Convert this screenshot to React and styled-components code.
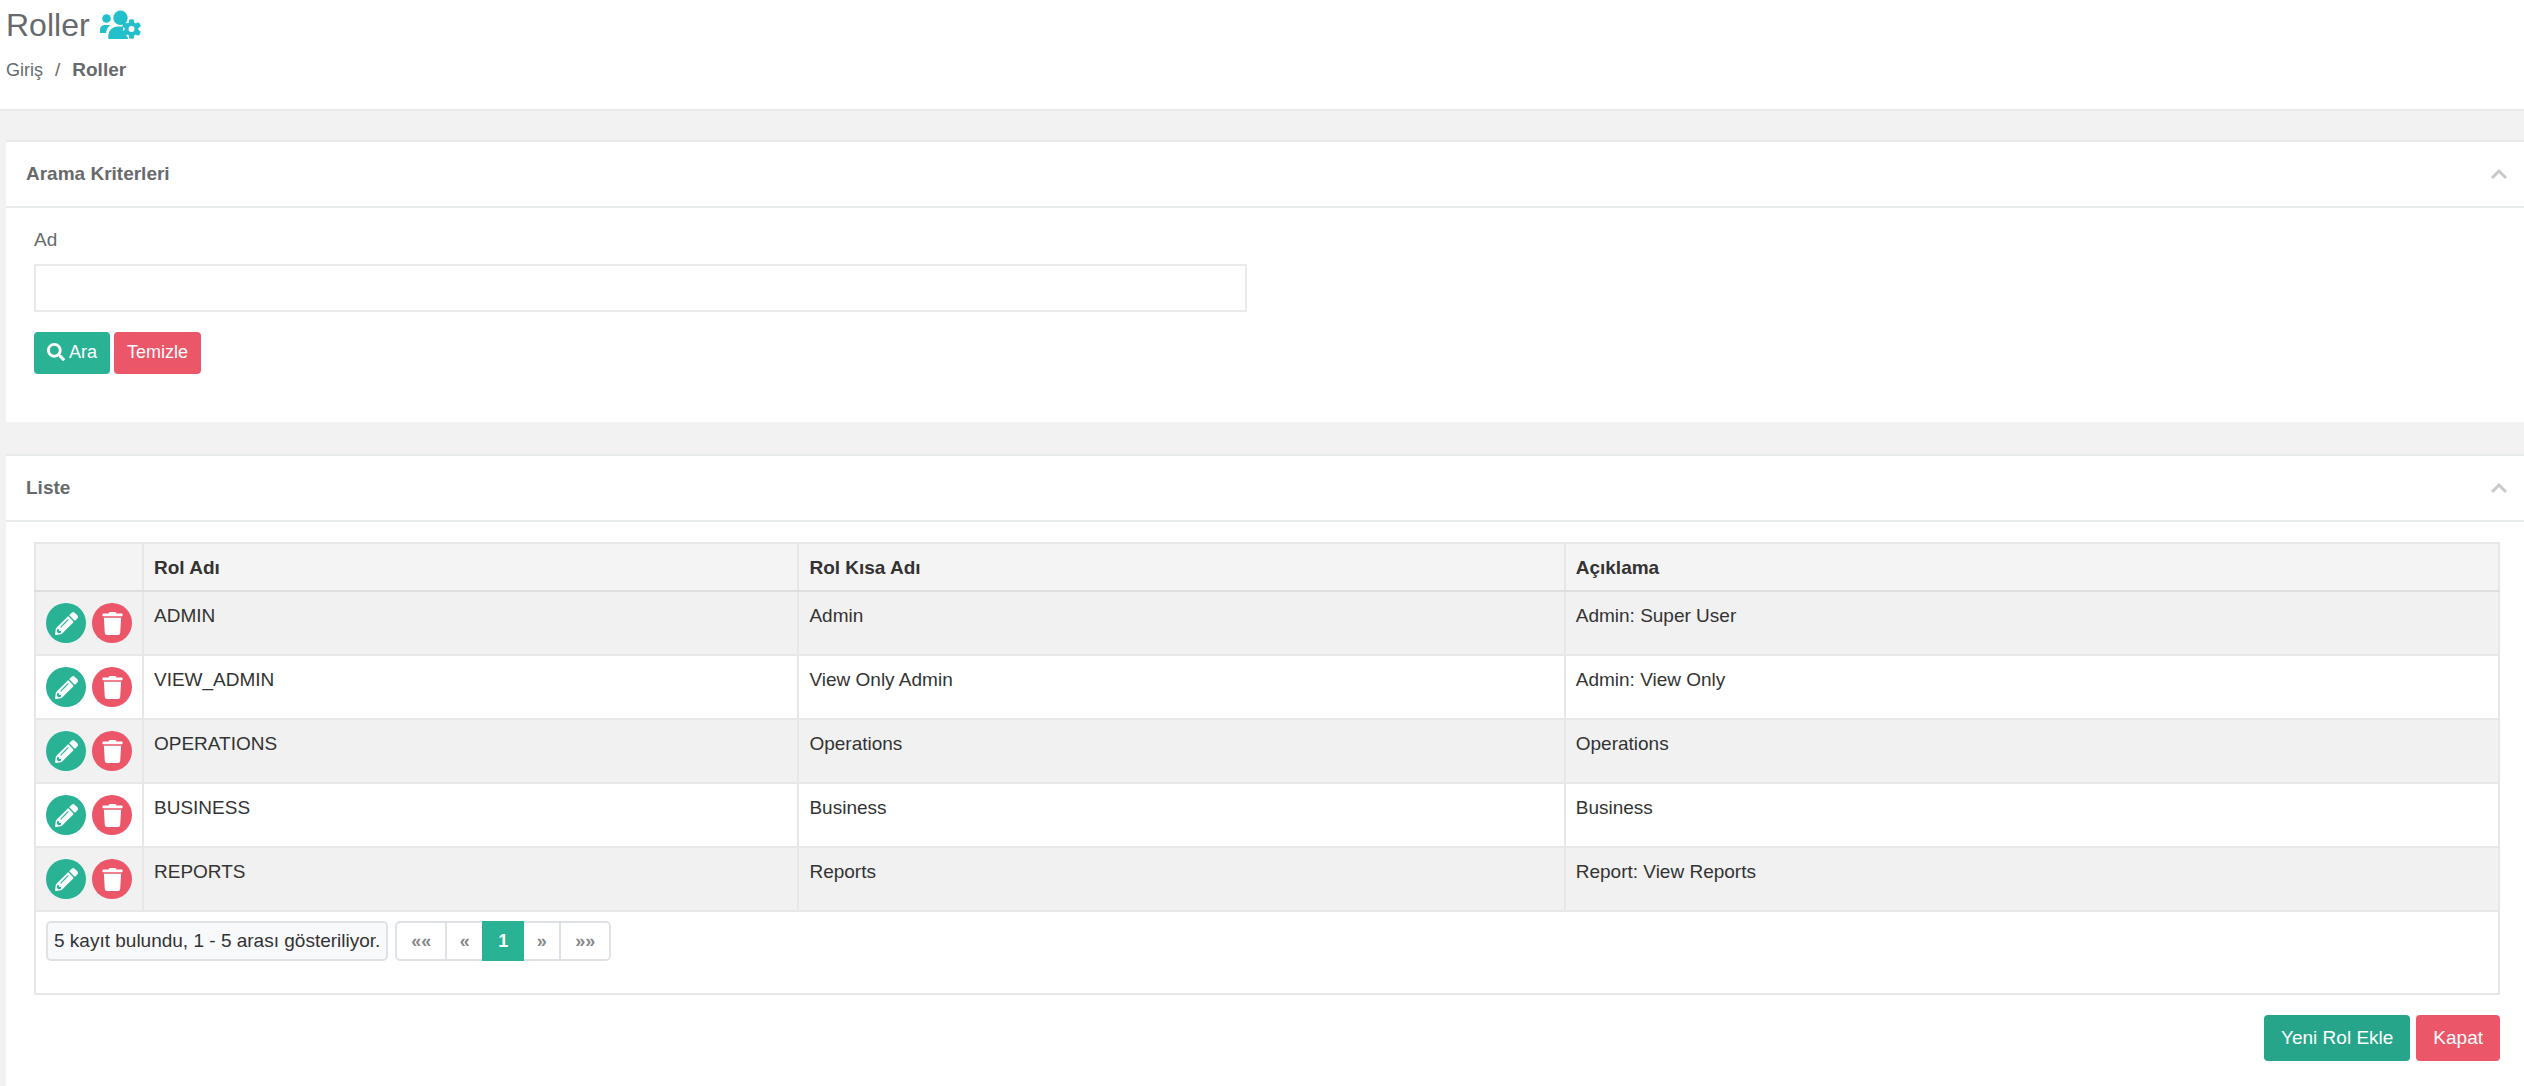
import { useState } from "react";
import styled, { createGlobalStyle, css } from "styled-components";
import { FaPencilAlt, FaSearch, FaTrash } from "react-icons/fa";

const ROLES = [
  { name: "ADMIN", shortName: "Admin", description: "Admin: Super User" },
  {
    name: "VIEW_ADMIN",
    shortName: "View Only Admin",
    description: "Admin: View Only",
  },
  { name: "OPERATIONS", shortName: "Operations", description: "Operations" },
  { name: "BUSINESS", shortName: "Business", description: "Business" },
  { name: "REPORTS", shortName: "Reports", description: "Report: View Reports" },
];

const PAGES = [
  { label: "««", width: 52 },
  { label: "«", width: 39 },
  { label: "1", width: 42, active: true },
  { label: "»", width: 39 },
  { label: "»»", width: 52 },
];

const Panel = ({ title, children }) => {
  const [open, setOpen] = useState(true);

  return (
    <PanelBox>
      <PanelHeader>
        <PanelTitle>{title}</PanelTitle>
        <CollapseButton
          type="button"
          aria-label={title}
          aria-expanded={open}
          $open={open}
          onClick={() => setOpen((prev) => !prev)}
        >
          <Chevron />
        </CollapseButton>
      </PanelHeader>
      {open && children}
    </PanelBox>
  );
};

const Chevron = () => (
  <svg width="18" height="12" viewBox="0 0 18 12" aria-hidden="true">
    <path d="m2 10 7-7 7 7" fill="none" stroke="currentColor" strokeWidth="3" />
  </svg>
);

const RolesIcon = () => (
  <svg viewBox="0 0 42 30" fill="currentColor" aria-hidden="true">
    <circle cx="7.5" cy="8.5" r="4.3" />
    <circle cx="21.5" cy="7.8" r="7.2" />
    <path d="M1 23v-3.5A5 5 0 0 1 6 15h5.5C8.5 17 7.2 20 7.2 23z" />
    <path d="M9.3 29v-3.5a9 9 0 0 1 9-9H26l3 12.5z" />
    <circle cx="32.5" cy="19" r="8.6" fill="#fff" />
    {[0, 60, 120, 180, 240, 300].map((angle) => (
      <path
        key={angle}
        d="M30 14.5 30.6 10q1.9-.6 3.8 0l.6 4.5z"
        stroke="currentColor"
        strokeWidth="1"
        transform={`rotate(${angle} 32.5 19)`}
      />
    ))}
    <circle cx="32.5" cy="19" r="6.8" />
    <circle cx="32.5" cy="19" r="3" fill="#fff" />
  </svg>
);

const App = () => {
  const [name, setName] = useState("");

  return (
    <>
      <GlobalStyle />
      <PageHeader>
        <PageTitle>
          Roller
          <RolesIcon />
        </PageTitle>
        <Breadcrumb>
          <a href="#giris">Giriş</a>
          <span>/</span>
          <strong>Roller</strong>
        </Breadcrumb>
      </PageHeader>
      <Content>
        <Panel title="Arama Kriterleri">
          <SearchForm onSubmit={(e) => e.preventDefault()}>
            <label htmlFor="role-name">Ad</label>
            <TextInput
              id="role-name"
              value={name}
              onChange={(e) => setName(e.target.value)}
            />
            <SearchActions>
              <Button type="submit" $size="small">
                <FaSearch />
                Ara
              </Button>
              <Button
                type="button"
                $size="small"
                $variant="danger"
                onClick={() => setName("")}
              >
                Temizle
              </Button>
            </SearchActions>
          </SearchForm>
        </Panel>
        <Panel title="Liste">
          <ListBody>
            <RoleTable>
              <colgroup>
                <ActionCol />
                <NameCol />
                <ShortNameCol />
                <col />
              </colgroup>
              <thead>
                <tr>
                  <th aria-label="İşlemler" />
                  <th>Rol Adı</th>
                  <th>Rol Kısa Adı</th>
                  <th>Açıklama</th>
                </tr>
              </thead>
              <tbody>
                {ROLES.map((role) => (
                  <tr key={role.name}>
                    <td>
                      <RowActions>
                        <RoundButton type="button" aria-label="Düzenle">
                          <FaPencilAlt />
                        </RoundButton>
                        <RoundButton
                          type="button"
                          aria-label="Sil"
                          $variant="danger"
                        >
                          <FaTrash />
                        </RoundButton>
                      </RowActions>
                    </td>
                    <td>{role.name}</td>
                    <td>{role.shortName}</td>
                    <td>{role.description}</td>
                  </tr>
                ))}
              </tbody>
              <tfoot>
                <tr>
                  <td colSpan={4}>
                    <Footer>
                      <RecordInfo>
                        5 kayıt bulundu, 1 - 5 arası gösteriliyor.
                      </RecordInfo>
                      <Pagination>
                        {PAGES.map(({ label, width, active }) => (
                          <PageButton
                            key={label}
                            type="button"
                            $width={width}
                            $active={active}
                          >
                            {label}
                          </PageButton>
                        ))}
                      </Pagination>
                    </Footer>
                  </td>
                </tr>
              </tfoot>
            </RoleTable>
            <ListActions>
              <Button type="button" $variant="dark">
                Yeni Rol Ekle
              </Button>
              <Button type="button" $variant="danger">
                Kapat
              </Button>
            </ListActions>
          </ListBody>
        </Panel>
      </Content>
    </>
  );
};

const COLORS = {
  primary: "#29b294",
  dark: "#26a58a",
  danger: "#ec5669",
};

const GlobalStyle = createGlobalStyle`
  * {
    box-sizing: border-box;
  }

  body {
    margin: 0;
    background: #f2f2f2;
    color: #676a6c;
    font-family: "Liberation Sans", Arial, sans-serif;
    font-size: 19px;
    line-height: 24px;
  }

  button,
  input {
    font: inherit;
  }
`;

const PageHeader = styled.header`
  height: 111px;
  padding: 6px;
  background: #fff;
  border-bottom: 2px solid #e9ebeb;
`;

const PageTitle = styled.h1`
  display: flex;
  align-items: center;
  gap: 9px;
  margin: 0;
  font-size: 32px;
  font-weight: 400;
  line-height: 38px;

  svg {
    width: 42px;
    height: 30px;
    color: #23bfcb;
  }
`;

const Breadcrumb = styled.nav`
  display: flex;
  gap: 12px;
  margin-top: 14px;

  a {
    color: inherit;
    font-size: 18px;
    text-decoration: none;
  }
`;

const Content = styled.main`
  display: flex;
  flex-direction: column;
  gap: 32px;
  padding: 29px 0 0 6px;
`;

const PanelBox = styled.section`
  background: #fff;
  border-top: 2px solid #e7eaea;
`;

const PanelHeader = styled.div`
  display: flex;
  align-items: center;
  justify-content: space-between;
  height: 66px;
  padding: 0 16px 0 20px;
  border-bottom: 2px solid #e9ecec;
`;

const PanelTitle = styled.h2`
  margin: 0;
  font-size: 19px;
  line-height: 24px;
`;

const CollapseButton = styled.button`
  display: flex;
  padding: 0;
  border: 0;
  background: none;
  color: #c9c9cb;
  cursor: pointer;
  transform: ${({ $open }) => ($open ? "none" : "rotate(180deg)")};
`;

const SearchForm = styled.form`
  display: flex;
  flex-direction: column;
  align-items: flex-start;
  padding: 20px 28px 48px;
`;

const TextInput = styled.input`
  width: calc(50% - 18px);
  height: 48px;
  margin: 12px 0 20px;
  padding: 0 16px;
  border: 2px solid #e8ebea;
  outline: 0;
`;

const SearchActions = styled.div`
  display: flex;
  gap: 4px;
`;

const variantColor = css`
  background: ${({ $variant = "primary" }) => COLORS[$variant]};
`;

const Button = styled.button`
  display: flex;
  align-items: center;
  justify-content: center;
  height: 46px;
  padding: 0 17px;
  border: 0;
  border-radius: 4px;
  color: #fff;
  cursor: pointer;
  ${variantColor}

  ${({ $size }) =>
    $size === "small" &&
    css`
      gap: 4px;
      height: 42px;
      padding: 0 13px 2px;
      font-size: 18px;
    `}
`;

const ListBody = styled.div`
  padding: 20px 24px 26px 28px;
`;

const RoleTable = styled.table`
  width: 100%;
  border-collapse: collapse;
  table-layout: fixed;
  color: #333;

  th,
  td {
    border: 2px solid #e7e7e7;
    text-align: left;
    vertical-align: top;
  }

  th {
    height: 48px;
    padding: 12px 10px 10px;
    background: #f4f4f4;
    border-bottom-color: #dedede;
  }

  tbody td {
    height: 64px;
    padding: 12px 10px 10px;
  }

  tbody td:first-child {
    padding-top: 11px;
  }

  tbody tr:nth-child(odd) {
    background: #f1f1f1;
  }

  tfoot td {
    padding: 9px 10px 32px;
  }
`;

const ActionCol = styled.col`
  width: 108px;
`;

const NameCol = styled.col`
  width: 26.6%;
`;

const ShortNameCol = styled.col`
  width: 31.1%;
`;

const RowActions = styled.div`
  display: flex;
  gap: 6px;
`;

const RoundButton = styled.button`
  display: flex;
  align-items: center;
  justify-content: center;
  width: 40px;
  height: 40px;
  padding: 0;
  border: 0;
  border-radius: 50%;
  color: #fff;
  font-size: 23px;
  cursor: pointer;
  ${variantColor}
`;

const Footer = styled.div`
  display: flex;
  gap: 7px;
`;

const RecordInfo = styled.span`
  height: 40px;
  padding: 6px;
  border: 2px solid #dee2e3;
  border-radius: 5px;
  background: #f8f9fb;
`;

const Pagination = styled.div`
  display: flex;
`;

const PageButton = styled.button`
  width: ${({ $width }) => $width}px;
  height: 40px;
  padding: 0;
  border: 2px solid #dee2e6;
  background: #fff;
  color: #85878a;
  font-size: 18px;
  font-weight: 700;
  cursor: pointer;

  & + & {
    margin-left: -2px;
  }

  &:first-child {
    border-radius: 5px 0 0 5px;
  }

  &:last-child {
    border-radius: 0 5px 5px 0;
  }

  ${({ $active }) =>
    $active &&
    css`
      z-index: 1;
      border-color: ${COLORS.primary};
      background: ${COLORS.primary};
      color: #fff;
    `}
`;

const ListActions = styled.div`
  display: flex;
  justify-content: flex-end;
  gap: 6px;
  margin-top: 20px;
`;

export default App;
